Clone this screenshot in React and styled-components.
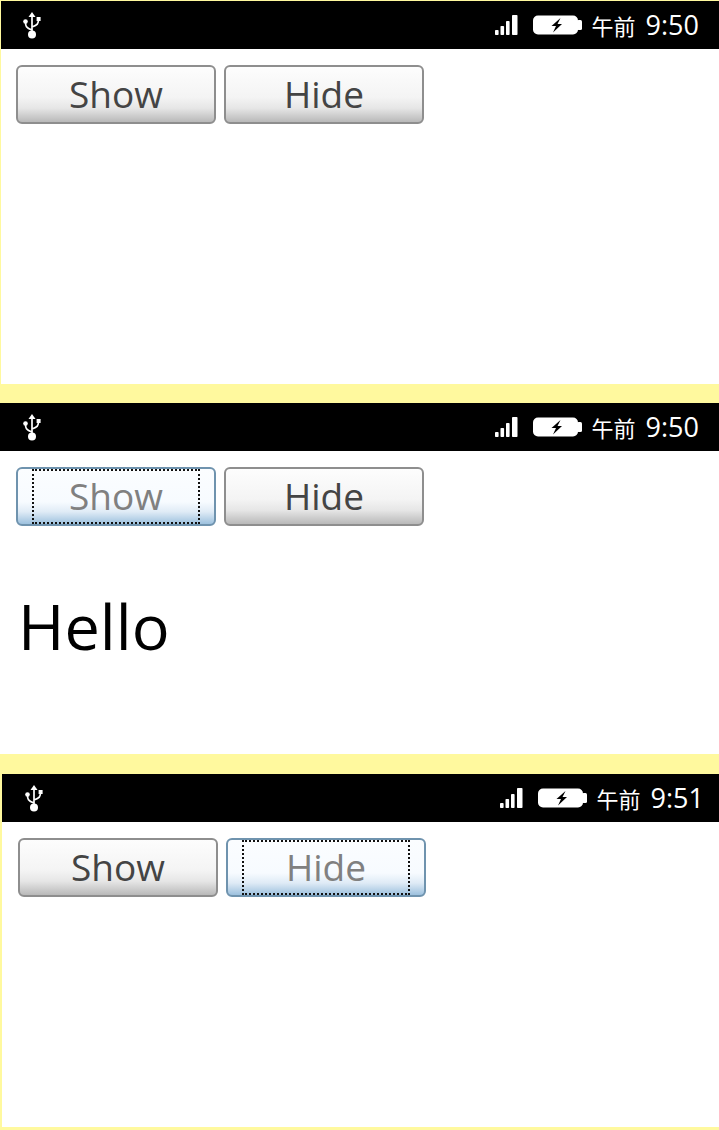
import React from "react";
import styled, { createGlobalStyle } from "styled-components";

const screens = [
  { id: 1, time: "9:50", height: 383, inset: 1, left: 15, usb: 21, right: 20, pressed: null, hello: false, after: 19 },
  { id: 2, time: "9:50", height: 351, inset: 0, left: 16, usb: 22, right: 20, pressed: "Show", hello: true, after: 20 },
  { id: 3, time: "9:51", height: 353, inset: 2, left: 16, usb: 22, right: 15, pressed: "Hide", hello: false, after: 3 },
];

function UsbIcon() {
  return (
    <svg width="20" height="28" viewBox="0 0 20 28">
      <path d="M10 1 L13.5 6 H6.5 Z" fill="#fff" />
      <path
        d="M10 5 V22 M10 19 C4 17 3.5 15 3.5 11 M10 16 C15.5 14 16.5 13 16.5 8"
        fill="none"
        stroke="#fff"
        strokeWidth="1.7"
      />
      <circle cx="3.5" cy="10.5" r="2.3" fill="#fff" />
      <rect x="14.6" y="6" width="4" height="4" fill="#fff" />
      <circle cx="10" cy="23.5" r="4" fill="#fff" />
    </svg>
  );
}

function SignalIcon() {
  return (
    <svg width="24" height="22" viewBox="0 0 24 22">
      <rect x="0" y="16" width="3.6" height="5" rx="0.8" fill="#fff" />
      <rect x="5.5" y="12" width="3.6" height="9" rx="0.8" fill="#fff" />
      <rect x="11" y="7" width="3.6" height="14" rx="0.8" fill="#fff" />
      <rect x="17" y="1" width="5.5" height="20" rx="0.8" fill="#fff" />
    </svg>
  );
}

function BatteryIcon() {
  return (
    <svg width="49" height="20" viewBox="0 0 49 20">
      <rect x="0" y="0.5" width="45" height="19" rx="5" fill="#fff" />
      <rect x="44" y="5" width="5" height="10" rx="1.5" fill="#fff" />
      <path d="M27.5 3 L18.5 11 H23 L20 17.5 L29 9 H24.5 Z" fill="#000" />
    </svg>
  );
}

export default function App() {
  return (
    <>
      <GlobalStyle />
      <Page>
        {screens.map((screen) => (
          <Screen
            key={screen.id}
            $height={screen.height}
            $inset={screen.inset}
            $after={screen.after}
          >
            <StatusBar $left={screen.usb} $right={screen.right}>
              <UsbSlot>
                <UsbIcon />
              </UsbSlot>
              <StatusRight>
                <SignalIcon />
                <BatterySlot>
                  <BatteryIcon />
                </BatterySlot>
                <Meridiem>午前</Meridiem>
                <Clock>{screen.time}</Clock>
              </StatusRight>
            </StatusBar>
            <Content $left={screen.left}>
              <ButtonRow>
                <ActionButton $pressed={screen.pressed === "Show"}>Show</ActionButton>
                <ActionButton $pressed={screen.pressed === "Hide"}>Hide</ActionButton>
              </ButtonRow>
              {screen.hello && <Greeting>Hello</Greeting>}
            </Content>
          </Screen>
        ))}
      </Page>
    </>
  );
}

const GlobalStyle = createGlobalStyle`
  html, body {
    margin: 0;
    padding: 0;
    background: #fff99e;
  }
`;

const Page = styled.div`
  width: 719px;
  height: 1130px;
  padding-top: 1px;
  box-sizing: border-box;
  overflow: hidden;
  font-family: "Open Sans", "Noto Sans CJK JP", sans-serif;
`;

const Screen = styled.section`
  height: ${(p) => p.$height}px;
  margin-left: ${(p) => p.$inset}px;
  margin-bottom: ${(p) => p.$after}px;
  background: #ffffff;
  display: flex;
  flex-direction: column;
`;

const StatusBar = styled.div`
  height: 48px;
  flex: none;
  background: #000000;
  color: #ffffff;
  display: flex;
  align-items: center;
  justify-content: space-between;
  padding: 0 ${(p) => p.$right}px 0 ${(p) => p.$left}px;
`;

const UsbSlot = styled.div`
  display: flex;
  align-items: center;
`;

const StatusRight = styled.div`
  display: flex;
  align-items: center;
`;

const BatterySlot = styled.div`
  display: flex;
  margin: 0 10px 0 14px;
`;

const Meridiem = styled.span`
  font-family: "Noto Sans CJK JP", sans-serif;
  font-size: 22px;
  line-height: 47px;
  margin-right: 10px;
`;

const Clock = styled.span`
  font-size: 27px;
  line-height: 47px;
  margin-bottom: 2px;
`;

const Content = styled.div`
  padding: 16px 0 0 ${(p) => p.$left}px;
`;

const ButtonRow = styled.div`
  display: flex;
  gap: 8px;
`;

const ActionButton = styled.button`
  position: relative;
  width: 200px;
  height: 59px;
  padding: 0 0 2px;
  border-radius: 6px;
  border: 2px solid ${(p) => (p.$pressed ? "#6f93ae" : "#8e8e8e")};
  background: ${(p) =>
    p.$pressed
      ? "linear-gradient(#fbfdff 0%, #f7fbff 60%, #dfebf6 78%, #9dc1de 100%)"
      : "linear-gradient(#fdfdfd 0%, #f4f4f4 55%, #e6e6e6 75%, #b9b9b9 100%)"};
  color: ${(p) => (p.$pressed ? "#808080" : "#444444")};
  font-family: "Open Sans", sans-serif;
  font-size: 37px;
  line-height: 53px;

  &::after {
    content: "";
    display: ${(p) => (p.$pressed ? "block" : "none")};
    position: absolute;
    top: 0;
    bottom: 0;
    left: 14px;
    right: 14px;
    border: 2px dotted #111111;
  }
`;

const Greeting = styled.p`
  margin: 60px 0 0 2px;
  font-size: 63px;
  line-height: 80px;
  color: #000000;
`;
